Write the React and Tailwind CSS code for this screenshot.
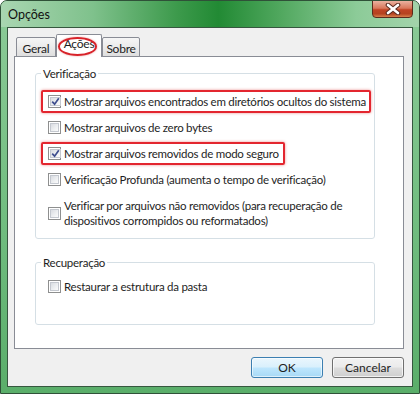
import React from 'react';

const font = "font-['Lato',sans-serif]";

function CheckBox({ checked }) {
  return (
    <span className="shrink-0 w-[13px] h-[13px] border border-[#8e8f8f] bg-white p-[1px] flex">
      <span className="flex-1 border border-[#c4c8cf] bg-[linear-gradient(135deg,#d9dce1_0%,#eef0f2_60%,#fbfbfb_100%)] flex items-center justify-center">
        {checked && (
          <svg width="9" height="9" viewBox="0 0 9 9">
            <path d="M1.2 4.6 L3.6 7.2 L7.8 1.2" fill="none" stroke="#3f4f8f" strokeWidth="1.7" />
          </svg>
        )}
      </span>
    </span>
  );
}

function Option({ checked, marked, right = 5, children }) {
  return (
    <div className="relative flex items-center gap-[3px] w-fit">
      <CheckBox checked={checked} />
      <span className="leading-[15px] whitespace-nowrap">{children}</span>
      {marked && (
        <span
          className={`pointer-events-none absolute -left-[7px] -top-[4px] -bottom-[4px] border-2 border-[#e3262f] rounded-[2px] shadow-[0_0_3px_rgba(210,0,0,0.45)] ${right === 6 ? '-right-[6px]' : '-right-[5px]'}`}
        />
      )}
    </div>
  );
}

function Group({ title, className = '', children, padTop, padBottom }) {
  return (
    <fieldset className={`border border-[#d5dfe5] rounded-[3px] p-0 m-0 ${className}`}>
      <legend className="ml-[5px] px-[2px] leading-[15px] text-[#1e1e1e]">{title}</legend>
      <div className={`pl-[12px] flex flex-col gap-[11px] ${padTop} ${padBottom}`}>{children}</div>
    </fieldset>
  );
}

function Tab({ label, active }) {
  if (active) {
    return (
      <div className="relative z-10 w-[46px] h-[23px] bg-white border border-b-0 border-[#898c95] rounded-t-[2px] flex justify-center pt-[1px]">
        <span className="leading-[15px]">{label}</span>
        <span className="pointer-events-none absolute left-[1px] right-[4px] top-[2px] bottom-[1px] rounded-[50%] border-2 border-[#d8232a] shadow-[0_0_2px_rgba(200,0,0,0.4)]" />
      </div>
    );
  }
  return (
    <div className="h-[20px] border border-[#898c95] rounded-t-[2px] bg-[linear-gradient(180deg,#f6f6f6_0%,#ebebeb_50%,#dedede_100%)] flex items-center justify-center px-[5px]">
      <span className="leading-[15px] pt-[2px]">{label}</span>
    </div>
  );
}

export default function App() {
  return (
    <div className={`${font} text-[11.5px] tracking-[-0.25px] text-[#1e1e1e] w-[420px] h-[394px] overflow-hidden rounded-t-[7px] border border-[#2f5138] bg-[linear-gradient(180deg,#8ccb98_0%,#6fbc7e_60%,#5aae6a_100%)] flex flex-col`}>
      {/* title bar */}
      <div className="h-[26px] shrink-0 flex items-start justify-between pl-[7px] pr-[6px] bg-[linear-gradient(90deg,#a9d6b1_0%,#7fc18c_22%,#3d9a4c_42%,#228a34_52%,#4ea65c_66%,#8ccb98_85%,#a3d3ab_100%)]">
        <span className="mt-[6px] text-[12.5px] tracking-normal leading-[16px] text-[#101010]">Opções</span>
        <div className="w-[41px] h-[18px] -mt-px rounded-b-[4px] border border-[#5b2a1c] bg-[linear-gradient(180deg,#eab1a0_0%,#d9785c_45%,#c04324_55%,#b5421f_80%,#d7804c_100%)] flex items-center justify-center">
          <svg width="16" height="12" viewBox="0 0 16 12">
            <path d="M3 2 L13 10 M13 2 L3 10" stroke="#5a2b20" strokeWidth="4.6" strokeLinecap="round" />
            <path d="M3 2 L13 10 M13 2 L3 10" stroke="#ffffff" strokeWidth="2.6" strokeLinecap="round" />
          </svg>
        </div>
      </div>

      {/* client area */}
      <div className="flex-1 mx-[6px] mb-[6px] border border-[#36573f] bg-[#f0f0f0] flex flex-col pt-[6px]">
        <div className="ml-[6px] mr-[8px] flex-1 flex flex-col">
          <div className="relative z-10 flex items-end h-[23px] -mb-px pl-[2px] text-[12px]">
            <div className="w-[40px] flex flex-col"><Tab label="Geral" /></div>
            <Tab label="Ações" active />
            <div className="w-[38px] flex flex-col"><Tab label="Sobre" /></div>
          </div>
          <div className="flex-1 bg-white border border-[#898c95] pl-[20px] pr-[28px] pt-[9px]">
            <Group title="Verificação" padTop="pt-[13px]" padBottom="pb-[10px]">
              <Option checked marked>Mostrar arquivos encontrados em diretórios ocultos do sistema</Option>
              <Option>Mostrar arquivos de zero bytes</Option>
              <Option checked marked right={6}>Mostrar arquivos removidos de modo seguro</Option>
              <Option>Verificação Profunda (aumenta o tempo de verificação)</Option>
              <Option>
                Verificar por arquivos não removidos (para recuperação de
                <br />
                dispositivos corrompidos ou reformatados)
              </Option>
            </Group>
            <Group title="Recuperação" className="mt-[16px]" padTop="pt-[9px]" padBottom="pb-[30px]">
              <Option>Restaurar a estrutura da pasta</Option>
            </Group>
          </div>
          <div className="flex justify-end gap-[9px] mt-[8px] mb-[8px] text-[12px] tracking-normal">
            <button className="w-[72px] h-[21px] rounded-[3px] border border-[#3c7fb1] bg-[linear-gradient(180deg,#eaf6fd_0%,#d9f0fc_48%,#bee6fd_52%,#a7d9f5_100%)] shadow-[inset_0_0_0_1px_rgba(255,255,255,0.6)] leading-[15px]">
              OK
            </button>
            <button className="w-[72px] h-[21px] rounded-[3px] border border-[#707070] bg-[linear-gradient(180deg,#f2f2f2_0%,#ebebeb_48%,#dddddd_52%,#cfcfcf_100%)] shadow-[inset_0_0_0_1px_rgba(255,255,255,0.7)] leading-[15px]">
              Cancelar
            </button>
          </div>
        </div>
      </div>
    </div>
  );
}
